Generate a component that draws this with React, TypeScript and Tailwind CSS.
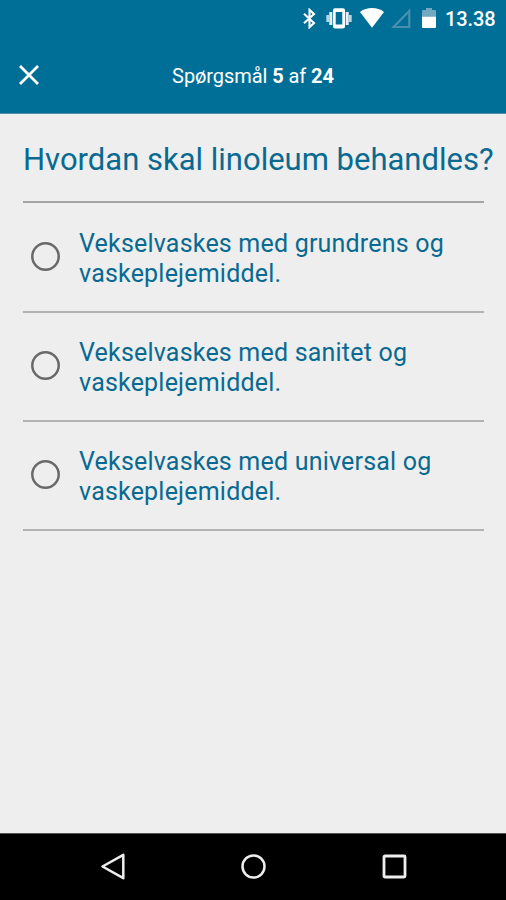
const QUESTION = "Hvordan skal linoleum behandles?";

const ANSWERS = [
  ["Vekselvaskes med grundrens og", "vaskeplejemiddel."],
  ["Vekselvaskes med sanitet og", "vaskeplejemiddel."],
  ["Vekselvaskes med universal og", "vaskeplejemiddel."],
];

const StatusBar = () => (
  <div className="flex h-9 items-start justify-end pr-[11px] text-white">
    <svg className="mt-2 mr-2.5" width="13" height="21" viewBox="0 0 13 21" fill="none" stroke="currentColor" strokeWidth="2.1">
      <path d="M1 5.8 11 15 6.5 19.2V1.8L11 6 1 15.2" />
    </svg>
    <svg className="mt-2 mr-2" width="26" height="21" viewBox="0 0 26 21">
      <path
        d="M9 .3h8c1.2 0 2 .8 2 2v16.2c0 1.200-.8 2-2 2H9c-1.200 0-2-.8-2-2V2.300c0-1.200.8-2 2-2ZM9.700 4v12.600h6.600V4Z"
        fill="currentColor"
        fillRule="evenodd"
      />
      <path d="M4.800 4v13M21.200 4v13" stroke="currentColor" strokeWidth="3" opacity="0.9" />
      <path d="M1.700 7v7M24.300 7v7" stroke="currentColor" strokeWidth="2.800" opacity="0.7" />
    </svg>
    <svg className="mt-2 mr-[7px]" width="24" height="20" viewBox="0 0 24 20">
      <path d="M0 3.900C3.500 1.300 7.500.100 12 .100s8.500 1.200 12 3.800L12 19.700Z" fill="currentColor" />
    </svg>
    <svg className="mt-2 mr-[11px] text-[#4a8fad]" width="20" height="21" viewBox="0 0 20 21">
      <path d="M18.300 3v16H2.600Z" fill="none" stroke="currentColor" strokeWidth="2.200" />
    </svg>
    <svg className="mt-2 mr-[9px]" width="14" height="20" viewBox="0 0 14 20">
      <path d="M4 0h6v2h2.700c.8 0 1.300.5 1.300 1.300V9H0V3.300C0 2.500.5 2 1.300 2H4Z" fill="#70a9c1" />
      <path d="M0 8.700h14v10c0 .8-.5 1.300-1.300 1.300H1.300C.5 20 0 19.500 0 18.700Z" fill="currentColor" />
    </svg>
    <span className="mt-[7px] w-[50px] text-[20px] leading-6 font-medium tracking-[-0.1px] whitespace-nowrap">
      13.38
    </span>
  </div>
);

const Header = () => (
  <div className="grid h-[77px] grid-cols-[1fr_auto_1fr] items-start pt-7 pl-[19px] text-white">
    <button type="button" aria-label="Luk" className="mt-px w-5">
      <svg width="20" height="20" viewBox="0 0 20 20" fill="none" stroke="currentColor" strokeWidth="2.700">
        <path d="m1 1 18 18M19 1 1 19" />
      </svg>
    </button>
    <h1 className="-ml-[19px] text-[20px] leading-6 tracking-[-0.07px] whitespace-nowrap">
      Spørgsmål <b>5</b> af <b>24</b>
    </h1>
  </div>
);

const Answer = ({ lines }: { lines: string[] }) => (
  <li className="flex h-[109px] items-start border-b-2 border-[#b2b2b2] pt-[25px] pl-2">
    <svg className="mt-[13px] shrink-0" width="29" height="29" viewBox="0 0 29 29">
      <circle cx="14.500" cy="14.500" r="13.200" fill="none" stroke="#696969" strokeWidth="2.500" />
    </svg>
    <p className="ml-[19px] text-[25px] leading-[29.500px] tracking-[0.2px] whitespace-nowrap">
      {lines.map((line) => (
        <span key={line} className="block">
          {line}
        </span>
      ))}
    </p>
  </li>
);

const NavigationBar = () => (
  <nav className="flex h-[67px] items-center justify-between border-t border-[#555] bg-black pr-[99px] pb-px pl-[101px] text-[#eee]">
    <svg width="24" height="27" viewBox="0 0 24 27" fill="none" stroke="currentColor" strokeWidth="2.500" strokeLinejoin="round">
      <path d="M1.500 13.500 22.300 1.800v23.400Z" />
    </svg>
    <svg width="25" height="25" viewBox="0 0 25 25" fill="none" stroke="currentColor" strokeWidth="2.500">
      <circle cx="12.500" cy="12.500" r="11" />
    </svg>
    <svg width="25" height="25" viewBox="0 0 25 25" fill="none" stroke="currentColor" strokeWidth="2.800">
      <rect x="2" y="2" width="21" height="21" rx="1" />
    </svg>
  </nav>
);

export default function App() {
  return (
    <div className="flex h-[900px] w-[506px] flex-col overflow-hidden bg-[#eee] font-['Roboto',sans-serif]">
      <header className="h-[114px] border-b border-[#4b91ad] bg-[#006f98]">
        <StatusBar />
        <Header />
      </header>
      <main className="flex-1 pr-[22px] pl-[23px] text-[#086a91]">
        <h2 className="flex h-[89px] items-start border-b-2 border-[#a3a5a5] pt-7 text-[31px] leading-9 whitespace-nowrap">
          {QUESTION}
        </h2>
        <ul className="pt-px">
          {ANSWERS.map((lines) => (
            <Answer key={lines[0]} lines={lines} />
          ))}
        </ul>
      </main>
      <NavigationBar />
    </div>
  );
}
